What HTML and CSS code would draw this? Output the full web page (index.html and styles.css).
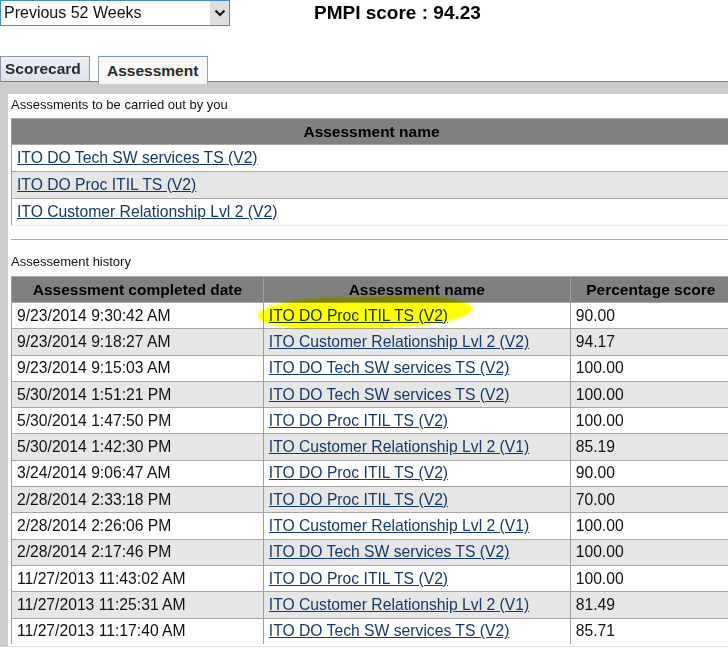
FILE: index.html
```html
<!DOCTYPE html>
<html>
<head>
<meta charset="utf-8">
<link rel="stylesheet" href="styles.css">
</head>
<body>
<div class="topbar">
  <div class="select">
    <span class="select-text">Previous 52 Weeks</span>
    <span class="select-btn"><svg width="12" height="8" viewBox="0 0 12 8"><path d="M1.5 1.5 L6 6 L10.5 1.5" fill="none" stroke="#1a1a1a" stroke-width="2.2"/></svg></span>
  </div>
  <div class="score">PMPI score : 94.23</div>
</div>
<div class="tabs">
  <div class="tab">Scorecard</div>
  <div class="tab active">Assessment</div>
</div>
<div class="panel">
  <div class="inner">
    <div class="label">Assessments to be carried out by you</div>
    <table class="grid todo">
      <tr><th>Assessment name</th></tr>
      <tr><td><a href="#">ITO DO Tech SW services TS (V2)</a></td></tr>
      <tr class="alt"><td><a href="#">ITO DO Proc ITIL TS (V2)</a></td></tr>
      <tr class="last"><td><a href="#">ITO Customer Relationship Lvl 2 (V2)</a></td></tr>
    </table>
    <div class="sep"></div>
    <div class="label label-hist">Assessement history</div>
    <table class="grid hist">
      <colgroup><col class="c1"><col class="c2"><col class="c3"></colgroup>
      <tr><th>Assessment completed date</th><th>Assessment name</th><th>Percentage score</th></tr>
      <tr><td>9/23/2014 9:30:42 AM</td><td class="hl-cell"><a href="#">ITO DO Proc ITIL TS (V2)</a><span class="marker"></span></td><td>90.00</td></tr>
      <tr class="alt"><td>9/23/2014 9:18:27 AM</td><td><a href="#">ITO Customer Relationship Lvl 2 (V2)</a></td><td>94.17</td></tr>
      <tr><td>9/23/2014 9:15:03 AM</td><td><a href="#">ITO DO Tech SW services TS (V2)</a></td><td>100.00</td></tr>
      <tr class="alt"><td>5/30/2014 1:51:21 PM</td><td><a href="#">ITO DO Tech SW services TS (V2)</a></td><td>100.00</td></tr>
      <tr><td>5/30/2014 1:47:50 PM</td><td><a href="#">ITO DO Proc ITIL TS (V2)</a></td><td>100.00</td></tr>
      <tr class="alt"><td>5/30/2014 1:42:30 PM</td><td><a href="#">ITO Customer Relationship Lvl 2 (V1)</a></td><td>85.19</td></tr>
      <tr><td>3/24/2014 9:06:47 AM</td><td><a href="#">ITO DO Proc ITIL TS (V2)</a></td><td>90.00</td></tr>
      <tr class="alt"><td>2/28/2014 2:33:18 PM</td><td><a href="#">ITO DO Proc ITIL TS (V2)</a></td><td>70.00</td></tr>
      <tr><td>2/28/2014 2:26:06 PM</td><td><a href="#">ITO Customer Relationship Lvl 2 (V1)</a></td><td>100.00</td></tr>
      <tr class="alt"><td>2/28/2014 2:17:46 PM</td><td><a href="#">ITO DO Tech SW services TS (V2)</a></td><td>100.00</td></tr>
      <tr><td>11/27/2013 11:43:02 AM</td><td><a href="#">ITO DO Proc ITIL TS (V2)</a></td><td>100.00</td></tr>
      <tr class="alt"><td>11/27/2013 11:25:31 AM</td><td><a href="#">ITO Customer Relationship Lvl 2 (V1)</a></td><td>81.49</td></tr>
      <tr><td>11/27/2013 11:17:40 AM</td><td><a href="#">ITO DO Tech SW services TS (V2)</a></td><td>85.71</td></tr>
    </table>
  </div>
</div>
</body>
</html>
```
FILE: styles.css
```css
html, body {
  margin: 0;
  padding: 0;
  overflow: hidden;
  background: #fff;
  font-family: "Liberation Sans", Arial, sans-serif;
  color: #111;
}

.topbar {
  display: flex;
  align-items: flex-start;
  height: 26px;
}

.select {
  box-sizing: border-box;
  width: 230px;
  height: 26px;
  border: 1px solid #3d8fcf;
  display: flex;
  align-items: stretch;
}

.select-text {
  flex: 1;
  font-size: 16px;
  line-height: 23px;
  padding-left: 3px;
  color: #111;
}

.select-btn {
  width: 19px;
  background: #dedede;
  display: flex;
  align-items: center;
  justify-content: center;
}

.score {
  margin-left: 84px;
  margin-top: 3px;
  font-size: 19px;
  font-weight: bold;
  line-height: 20px;
  color: #000;
}

.tabs {
  margin-top: 29px;
  height: 26px;
  border-bottom: 1px solid #808080;
  display: flex;
  align-items: flex-end;
  gap: 8px;
}

.tab {
  box-sizing: border-box;
  height: 25px;
  padding: 0 8px 0 4px;
  border: 1px solid #8e96aa;
  border-bottom: none;
  background: linear-gradient(#eef0f6, #dde1ec);
  font-size: 15.5px;
  font-weight: bold;
  line-height: 24px;
  color: #2b2b2b;
  width: 90px;
}

.tab.active {
  width: 110px;
  height: 28px;
  margin-bottom: -3px;
  padding-left: 8px;
  border-color: #9aa0ac;
  border-top-color: #7d93bd;
  background: #f7f7f7;
  line-height: 27px;
  position: relative;
  z-index: 1;
}

.panel {
  background: #cccccc;
  padding: 12px 0 0 8px;
}

.inner {
  background: #fff;
  width: 730px;
  padding: 3px 0 2px 3px;
  border-bottom: 1px solid #e4e4e4;
}

.label {
  font-size: 13px;
  line-height: 16px;
  margin-bottom: 5px;
  color: #111;
}

.label-hist {
  margin-top: 14px;
  margin-bottom: 6px;
}

.grid {
  border-collapse: collapse;
  width: 720px;
  border-left: 1px solid #a0a0a0;
}

.grid th {
  background: #808080;
  color: #000;
  font-size: 15.5px;
  font-weight: bold;
  height: 25px;
  padding: 0;
  border-top: 1px solid #a8a8a8;
  border-left: 1px solid #a0a0a0;
  text-align: center;
}

.grid td {
  font-size: 15.7px;
  height: 25.3px;
  padding: 0 5px;
  border-top: 1px solid #a6a6a6;
  border-left: 1px solid #a0a0a0;
  text-align: left;
  white-space: nowrap;
}

.todo td {
  height: 26px;
}

.todo tr.last td {
  border-bottom: 1px solid #ececec;
}

.grid tr.alt td {
  background: #e6e6e6;
}

.grid a {
  color: #16396b;
  text-decoration: underline;
}

.hist .c1 { width: 252px; }
.hist .c2 { width: 307px; }
.hist .c3 { width: 161px; }

.sep {
  margin-top: 13px;
  width: 720px;
  border-top: 1px solid #a9a9a9;
}

.hl-cell {
  position: relative;
}

.marker {
  position: absolute;
  left: -6px;
  top: -6px;
  width: 214px;
  height: 31px;
  background: #ffff00;
  border-radius: 35% 30% 40% 30% / 55% 45% 55% 45%;
  transform: rotate(-1.2deg);
  filter: blur(1.2px);
  mix-blend-mode: multiply;
  pointer-events: none;
}
```
